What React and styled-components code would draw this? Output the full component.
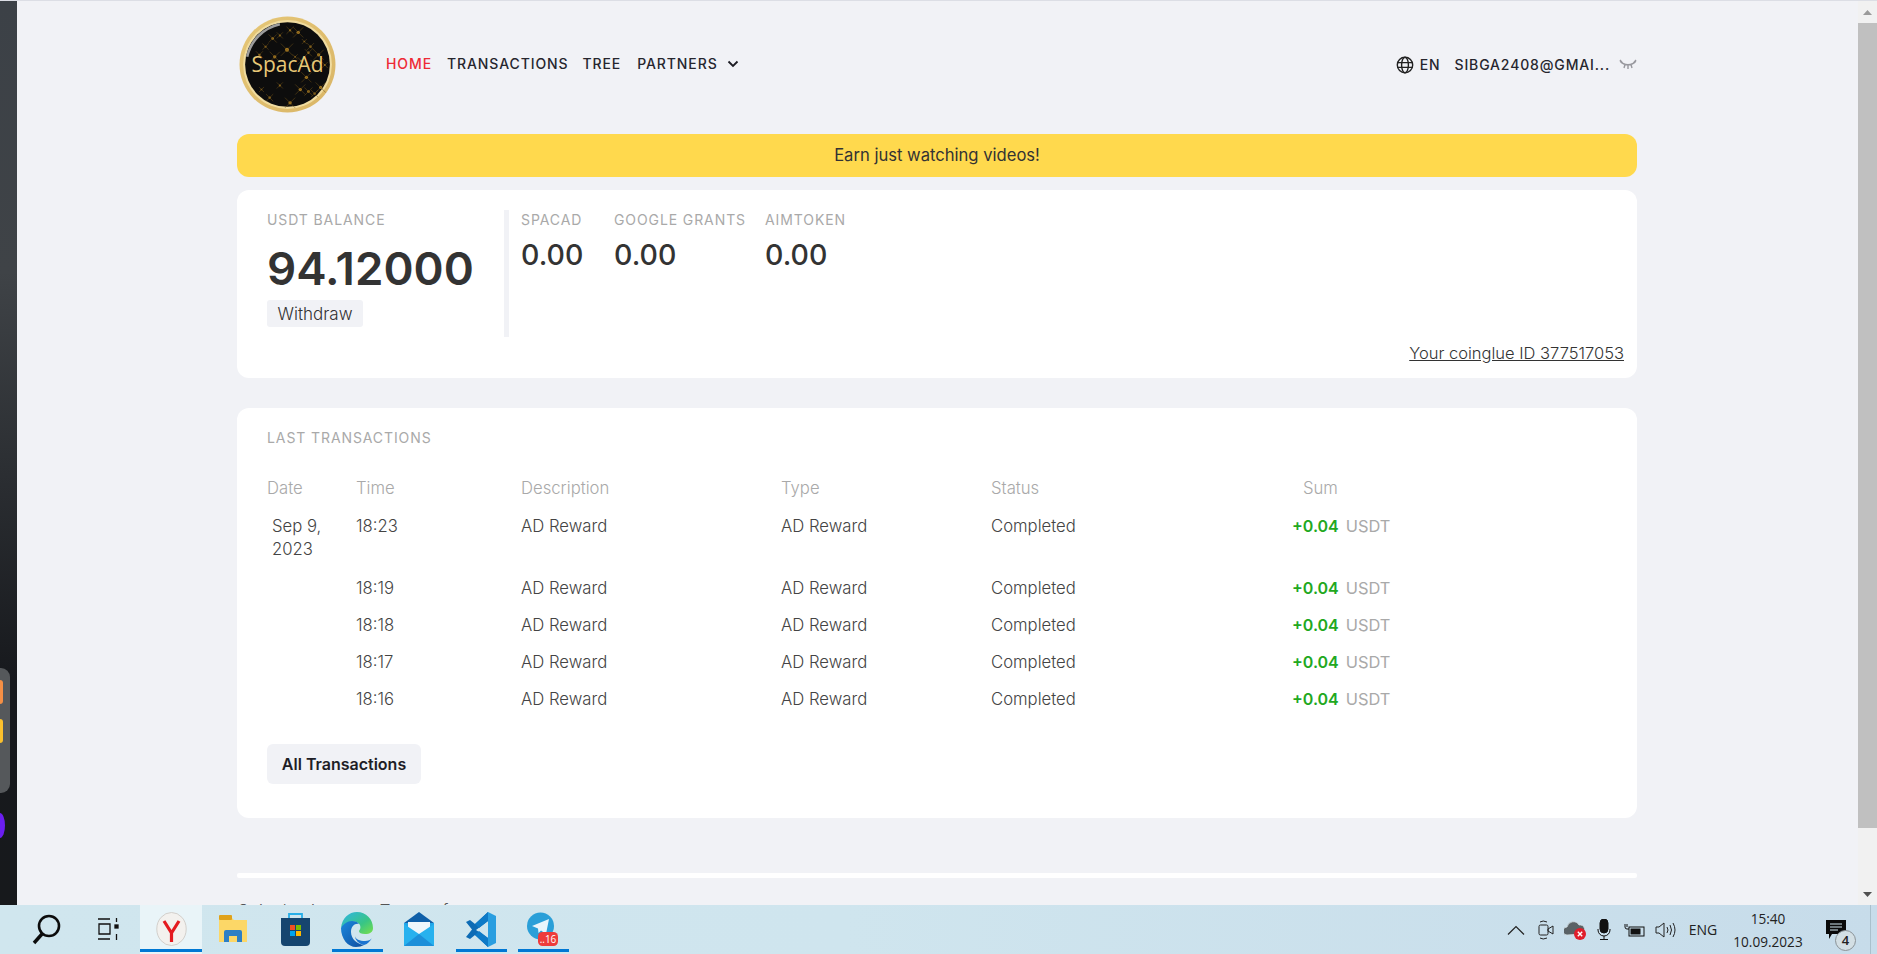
import React from "react";
import styled, { createGlobalStyle } from "styled-components";

const Global = createGlobalStyle`
  html, body { margin: 0; padding: 0; width: 1877px; height: 954px; overflow: hidden; background: #f1f2f6; }
  body { font-family: Inter, "Open Sans", sans-serif; color: #333; }
  * { box-sizing: border-box; }
`;

const Screen = styled.div`
  width: 1877px; height: 954px; display: flex; flex-direction: column; overflow: hidden;
`;
const Desk = styled.div`
  height: 905px; display: flex; border-top: 1px solid #dcdee5; background: #f1f2f6;
`;
const Strip = styled.div`
  width: 17px; flex: none; background: linear-gradient(180deg, #3c4147 0%, #3f4347 30%, #17191d 75%, #17191c 100%);
  display: flex; flex-direction: column; padding-top: 667px; gap: 20px;
`;
const Dock = styled.div`
  width: 10px; height: 125px; background: #55585b; border-radius: 0 9px 9px 0;
  display: flex; flex-direction: column; gap: 15px; padding-top: 12px;
`;
const DockTile = styled.div`
  width: 3px; height: 24px; border-radius: 0 5px 5px 0; background: ${p => p.$c};
`;
const DockDot = styled.div`
  width: 5px; height: 25px; border-radius: 0 5px 5px 0 / 0 12.5px 12.5px 0; background: #6b1ef0;
`;
const Main = styled.main`
  flex: 1; overflow: hidden; padding: 16px 0 0 220px;
`;
const Page = styled.div`
  width: 1400px;
`;
const Header = styled.header`
  height: 95px; display: flex; align-items: center; padding-left: 2px;
  & > svg:first-child { flex: none; }
`;
const Nav = styled.nav`
  display: flex; align-items: center; margin-left: 50px; padding-bottom: 2px;
`;
const NavLink = styled.a`
  font-size: 14px; font-weight: 500; letter-spacing: 0.9px; line-height: 20px;
  color: ${p => (p.$active ? "#ee2a35" : "#26262e")};
  margin-right: ${p => p.$gap}px; white-space: nowrap;
`;
const Right = styled.div`
  margin-left: auto; display: flex; align-items: center;
  & > svg:last-child { margin-left: 9px; }
`;
const RightText = styled.span`
  font-size: 14px; font-weight: 500; letter-spacing: 0.85px; color: #26262e; line-height: 20px; white-space: nowrap;
  margin-left: ${p => p.$ml}px;
`;
const Banner = styled.div`
  margin-top: 22px; height: 43px; border-radius: 12px; background: #ffd94d; padding-bottom: 2px;
  display: flex; align-items: center; justify-content: center;
  font-size: 16.6px; font-weight: 400; color: #333;
`;
const Card = styled.section`
  background: #fff; border-radius: 12px; margin-top: ${p => p.$mt}px; height: ${p => p.$h}px;
  padding: ${p => p.$pt}px 0 0 30px;
`;
const BalanceRow = styled.div`
  height: 127px; display: flex;
`;
const BalanceCol = styled.div`
  width: 237px; flex: none;
`;
const Label = styled.div`
  font-size: 14px; font-weight: 400; letter-spacing: 0.9px; line-height: 20px; color: #a9a9a9; white-space: nowrap;
`;
const BigValue = styled.div`
  font-size: 45.7px; font-weight: 600; line-height: 56px; margin-top: 11px; color: #333;
`;
const Withdraw = styled.button`
  display: block; border: 0; margin-top: 3px; width: 96px; height: 27px; border-radius: 3px; background: #f1f2f6;
  font: 300 17px Inter, sans-serif; color: #333; padding: 0;
`;
const Divider = styled.div`
  width: 5px; flex: none; background: #f1f2f6;
`;
const Token = styled.div`
  width: ${p => p.$w}px; flex: none; margin-left: ${p => p.$ml || 0}px;
`;
const TokenValue = styled.div`
  font-size: 28.5px; font-weight: 500; line-height: 34px; margin-top: 8px; color: #333;
`;
const LinkRow = styled.div`
  display: flex; justify-content: flex-end; padding-right: 13px; margin-top: 4px;
`;
const CoinLink = styled.a`
  font-size: 16.5px; font-weight: 300; line-height: 24px; color: #333; text-decoration: underline;
`;
const HeadRow = styled.div`
  display: grid; grid-template-columns: 89px 165px 260px 210px 301px 1fr;
  height: ${p => p.$h}px; font-size: 16.7px; font-weight: 300; line-height: 23px; color: #444;
`;
const TableHead = styled(HeadRow)`
  margin-top: 28px; margin-bottom: 7px; color: #a9a9a9; line-height: 24px; font-weight: 300;
`;
const Row = styled(HeadRow)`
  padding-top: 7.5px;
`;
const DateCell = styled.div`
  padding: 0 20px 0 5px;
`;
const SumHead = styled.div`
  padding-left: 11px;
`;
const Amount = styled.span`
  color: #22a81e; font-weight: 600; font-size: 16px;
`;
const Unit = styled.span`
  color: #a9a9a9; font-weight: 400; margin-left: 7px; font-size: 16.4px;
`;
const AllBtn = styled.button`
  display: block; margin-top: 26px; width: 154px; height: 40px; border: 0; border-radius: 6px;
  background: #f1f2f6; color: #1e1e26; font: 600 16px Inter, sans-serif; padding: 0 0 1px;
`;
const FooterLine = styled.div`
  margin-top: 55px; height: 5px; background: #fff; border-radius: 2px;
`;
const FooterLinks = styled.div`
  display: flex; margin-top: 23px; font-size: 16.7px; font-weight: 300; color: #555;
`;
const FooterLink = styled.a`
  margin-right: 55px;
`;
const Scrollbar = styled.div`
  width: 19px; flex: none; background: #f1f1f1; display: flex; flex-direction: column; align-items: center;
`;
const ScrollBtn = styled.div`
  height: 22px; width: 100%; display: flex; align-items: center; justify-content: center;
  margin-top: ${p => (p.$bottom ? "auto" : "0")};
`;
const Thumb = styled.div`
  width: 100%; height: 805px; background: #c0c0c0;
`;
const Taskbar = styled.footer`
  height: 49px; flex: none; background: linear-gradient(90deg, #d0e6ee 0%, #cfe5ee 45%, #c7dcea 100%);
  display: flex; align-items: stretch; padding-left: 16px;
`;
const Tile = styled.div`
  width: 62px; position: relative; display: flex; align-items: center; justify-content: center;
  padding-bottom: 1px;
  background: ${p => (p.$active ? "#e9f4f8" : "transparent")};
  &::after {
    content: ""; position: absolute; bottom: 2px; height: 3px; background: #0078d4;
    left: ${p => (p.$active ? 0 : 6)}px; right: ${p => (p.$active ? 0 : 5)}px;
    display: ${p => (p.$open ? "block" : "none")};
  }
`;
const Tray = styled.div`
  margin-left: auto; display: flex; align-items: center; padding-right: 6px; color: #111;
`;
const TrayIcon = styled.div`
  width: ${p => p.$w}px; display: flex; justify-content: center;
`;
const Lang = styled.div`
  font: 400 14px "Open Sans", sans-serif; width: 38px; margin-left: 4px; text-align: center; color: #222; white-space: nowrap;
`;
const Clock = styled.div`
  width: 76px; margin-left: 8px; text-align: center; font: 400 13.6px/23px "Open Sans", sans-serif; color: #222; white-space: nowrap;
`;
const Notify = styled.div`
  width: 65px; height: 100%; position: relative; display: flex; align-items: center; padding-left: 20px;
  border-right: 1px solid #a9c0cc;
`;
const Badge = styled.div`
  position: absolute; left: 29px; top: 25px; width: 21px; height: 21px; border-radius: 50%;
  border: 1.5px solid #8a9296; background: #d3dfe4; font: 600 13px/18px "Open Sans", sans-serif; text-align: center; color: #222;
`;

const stars = [
  [33,22,1.6],[40,19,1.2],[50,14,1.4],[58,16,2],[64,25,1],[70,30,1.4],[26,30,1.2],[20,38,1.4],[35,40,2],[47,33,2.4],[55,40,1],
  [61,44,1.4],[68,36,1.4],[78,38,2],[84,48,1.2],[73,46,1.2],[22,72,1],[30,80,1.4],[50,85,2],[60,72,2],[68,74,1.6],[74,76,1.4],[66,60,2],[80,70,2],[40,68,1.2]
];
const Logo = () => (
  <svg width="97" height="97" viewBox="0 0 95 95">
    <defs>
      <linearGradient id="ring" x1="0" y1="0" x2="1" y2="1">
        <stop offset="0" stopColor="#e6c777" /><stop offset="1" stopColor="#d9b566" />
      </linearGradient>
    </defs>
    <circle cx="47.5" cy="47.5" r="47" fill="url(#ring)" />
    <circle cx="47.5" cy="47.5" r="43.5" fill="#f0dca0" />
    <circle cx="47.5" cy="47.5" r="41.5" fill="#0d0d0d" />
    <path d="M8 40 A42 42 0 0 1 40 8" stroke="#9c9c9c" strokeWidth="2.5" fill="none" />
    {stars.map(([x, y, r], i) => (
      <g key={i} fill="#a97c22">
        <circle cx={x} cy={y} r={r * 0.8} />
        <path d={`M${x - r * 2.5} ${y - r * 2.5}L${x + r * 2.5} ${y + r * 2.5}M${x + r * 2.5} ${y - r * 2.5}L${x - r * 2.5} ${y + r * 2.5}`} stroke="#6e5218" strokeWidth=".5" />
      </g>
    ))}
    <text x="47.5" y="54.5" textAnchor="middle" fontFamily="Open Sans, sans-serif" fontSize="20.5" fontWeight="500" fill="#e8c877">SpacAd</text>
  </svg>
);
const Chevron = () => (
  <svg width="12" height="8" viewBox="0 0 12 8" fill="none" stroke="#1b1b22" strokeWidth="1.8"><path d="M1.5 1.5 6 6l4.5-4.5" /></svg>
);
const Globe = () => (
  <svg width="18" height="18" viewBox="0 0 18 18" fill="none" stroke="#222" strokeWidth="1.4">
    <circle cx="9" cy="9" r="7.7" /><ellipse cx="9" cy="9" rx="3.4" ry="7.7" /><path d="M1.3 6.6h15.4M1.3 11.4h15.4" />
  </svg>
);
const EyeClosed = () => (
  <svg width="18" height="12" viewBox="0 0 18 12" fill="none" stroke="#98989e" strokeWidth="1.4">
    <path d="M1 2c4 5 12 5 16 0M1 1l2.5 3M17 1l-2.5 3M6 5.5 5 9M12 5.5l1 3.5M9 6v4" />
  </svg>
);
const Search = () => (
  <svg width="30" height="32" viewBox="0 0 30 32" fill="none" stroke="#0c0c0c" strokeWidth="2.6">
    <circle cx="17" cy="13" r="10" /><path d="M10 21 2 30" strokeWidth="3.4" />
  </svg>
);
const TaskView = () => (
  <svg width="24" height="24" viewBox="0 0 24 24" fill="none" stroke="#111" strokeWidth="1.3">
    <path d="M1 2h12M1 22h12M2 7h11v10H2zM19.500 1v4M19.500 17v6" /><rect x="18" y="8" width="3" height="3" fill="#111" />
  </svg>
);
const Yandex = () => (
  <svg width="31" height="34" viewBox="0 0 31 34">
    <ellipse cx="15.500" cy="17" rx="14.700" ry="16.500" fill="#f3f1ee" stroke="#d2cfcb" />
    <path d="M8 9l7.500 12V30M23 9l-7.500 12" fill="none" stroke="#e41a1f" strokeWidth="3.200" />
  </svg>
);
const Explorer = () => (
  <svg width="28" height="28" viewBox="0 0 28 28">
    <path d="M0 2h12l3 3H28v22H0z" fill="#fcd767" /><rect y="0" width="13" height="5" rx="1" fill="#e0a21a" />
    <path d="M5 27V17q0-2 2-2h14q2 0 2 2v10h-5v-6h-8v6z" fill="#2d7fc5" />
  </svg>
);
const Store = () => (
  <svg width="29" height="34" viewBox="0 0 29 34">
    <path d="M8 7V2h13v5" fill="none" stroke="#28afe8" strokeWidth="1.800" />
    <path d="M0 6h29v24a4 4 0 0 1-4 4H4a4 4 0 0 1-4-4z" fill="#16456f" />
    <rect x="9" y="13" width="5" height="5" fill="#f25022" /><rect x="15" y="13" width="5" height="5" fill="#7fba00" />
    <rect x="9" y="19" width="5" height="5" fill="#00a4ef" /><rect x="15" y="19" width="5" height="5" fill="#ffb900" />
  </svg>
);
const Edge = () => (
  <svg width="32" height="35" viewBox="0 0 32 35">
    <defs>
      <linearGradient id="edgeA" x1="0" y1="0" x2="1" y2="1"><stop offset="0" stopColor="#2fb4e8" /><stop offset=".6" stopColor="#38c585" /><stop offset="1" stopColor="#79e04a" /></linearGradient>
      <linearGradient id="edgeB" x1="0" y1="0" x2="1" y2="1"><stop offset="0" stopColor="#1b87dd" /><stop offset="1" stopColor="#0f4fa0" /></linearGradient>
    </defs>
    <path d="M0 16C1 6 8 0 16 0c9 0 16 7 16 16 0 4-3 6-8 6-4 0-6-1-6-3 1-2 2-3 1-6-2-4-9-5-13-1-3 2-5 3-6 4z" fill="url(#edgeA)" />
    <path d="M0 16c1-2 5-7 11-7 3 0 6 1 7 3-4-1-8 2-8 8 0 7 6 12 13 13-2 1-5 2-8 2C7 35 0 27 0 16z" fill="url(#edgeB)" />
    <path d="M23 33c-5-1-9-5-9-9 0 3 5 5 10 5 3 0 6-1 7-3-2 3-4 6-8 7z" fill="#1a74d0" />
  </svg>
);
const Mail = () => (
  <svg width="30" height="34" viewBox="0 0 30 34">
    <path d="M15 0 30 11v5H0v-5z" fill="#0f5fa8" />
    <path d="M0 11h30v23H0z" fill="#22a5e8" />
    <path d="M4 10h22v7l-11 7-11-7z" fill="#eef6fb" />
    <path d="M0 12l15 10 15-10v22H0z" fill="#27b1ee" />
    <path d="M0 34 15 22l15 12z" fill="#1c8fd9" />
  </svg>
);
const VSCode = () => (
  <svg width="30" height="35" viewBox="0 0 30 35">
    <path d="M22 0 30 4v27l-8 4z" fill="#2a9ee0" />
    <path d="M22 0v9L10 18l12 8v9L9 23l-5 4-4-2 6-7.500L0 10l4-2 5 4z" fill="#0d6bb5" />
    <path d="M22 0 9 12l4 4 9-7zM22 35 9 23l4-4 9 7z" fill="#0e7ac7" />
  </svg>
);
const Telegram = () => (
  <svg width="32" height="34" viewBox="0 0 32 34">
    <circle cx="13.500" cy="14" r="13.500" fill="#2a9fd8" />
    <path d="M5 14 22 7l-3 15-5-3.500-2.500 2.500-.5-4.500z" fill="#e9f5fb" />
    <rect x="11" y="20" width="20" height="14" rx="4.500" fill="#ee3b3b" />
    <text x="21" y="31" textAnchor="middle" fontSize="10" fontFamily="Open Sans, sans-serif" fill="#fff">..16</text>
  </svg>
);
const TrayUp = () => (
  <svg width="18" height="10" viewBox="0 0 18 10" fill="none" stroke="#222" strokeWidth="1.200"><path d="M1 9.500 9 1.500l8 8" /></svg>
);
const Camera = () => (
  <svg width="16" height="20" viewBox="0 0 16 20" fill="none" stroke="#222" strokeWidth="1">
    <rect x="1" y="5" width="9" height="10" rx="1.500" /><path d="M10 9l5-3v8l-5-3zM2 2q3-2 7 0M2 18q3 2 7 0" />
  </svg>
);
const Cloud = () => (
  <svg width="22" height="20" viewBox="0 0 22 20">
    <path d="M3 15a4 4 0 0 1 0-8 6.500 6.500 0 0 1 12-2 4.500 4.500 0 0 1 2 9z" fill="#5a6266" stroke="#d2dde2" strokeWidth=".800" />
    <circle cx="16" cy="14" r="6" fill="#e01e2b" />
    <path d="M13.800 11.800l4.400 4.400M18.200 11.800l-4.400 4.400" stroke="#fff" strokeWidth="1.400" />
  </svg>
);
const Mic = () => (
  <svg width="14" height="21" viewBox="0 0 14 21" fill="none" stroke="#111" strokeWidth="1">
    <rect x="3" y="0" width="8" height="14" rx="4" fill="#111" /><path d="M1 10v1a6 6 0 0 0 12 0v-1M7 17v3M3 20.500h8" />
  </svg>
);
const Battery = () => (
  <svg width="21" height="14" viewBox="0 0 21 14" fill="none" stroke="#111" strokeWidth="1">
    <rect x="5" y="4" width="15" height="9" /><rect x="6.500" y="5.500" width="10" height="6" fill="#111" stroke="none" />
    <path d="M1 1v3q0 2 2 2h2M3 1v3" />
  </svg>
);
const Volume = () => (
  <svg width="21" height="16" viewBox="0 0 21 16" fill="none" stroke="#222" strokeWidth="1">
    <path d="M1 5h3l5-4v14l-5-4H1zM12 5q2 3 0 6M15 3q3 5 0 10M18 1q4 7 0 14" />
  </svg>
);
const Bubble = () => (
  <svg width="20" height="19" viewBox="0 0 20 19">
    <path d="M0 0h20v14H6l-3 5v-5H0z" fill="#0a0a0a" /><path d="M4 4h12M4 7h12M4 10h8" stroke="#cfe5ee" strokeWidth="1" />
  </svg>
);
const Arrow = ({ d, c }) => (
  <svg width="9" height="5" viewBox="0 0 9 5"><path d={d} fill={c} /></svg>
);

const rows = [
  { d: "Sep 9, 2023", t: "18:23", h: 62 },
  { t: "18:19", h: 37.3 },
  { t: "18:18", h: 37.3 },
  { t: "18:17", h: 37.3 },
  { t: "18:16", h: 37.3 },
];
const tiles = [
  { i: <Search /> }, { i: <TaskView /> }, { i: <Yandex />, active: true, open: true }, { i: <Explorer /> }, { i: <Store /> },
  { i: <Edge />, open: true }, { i: <Mail /> }, { i: <VSCode />, open: true }, { i: <Telegram />, open: true },
];

export default function App() {
  return (
    <Screen>
      <Global />
      <Desk>
        <Strip>
          <Dock><DockTile $c="#f58f45" /><DockTile $c="#fbc02d" /></Dock>
          <DockDot />
        </Strip>
        <Main>
          <Page>
            <Header>
              <Logo />
              <Nav>
                <NavLink $active $gap={15}>HOME</NavLink>
                <NavLink $gap={14}>TRANSACTIONS</NavLink>
                <NavLink $gap={16}>TREE</NavLink>
                <NavLink $gap={9}>PARTNERS</NavLink>
                <Chevron />
              </Nav>
              <Right>
                <Globe />
                <RightText $ml={6}>EN</RightText>
                <RightText $ml={14}>SIBGA2408@GMAI...</RightText>
                <EyeClosed />
              </Right>
            </Header>
            <Banner>Earn just watching videos!</Banner>
            <Card $mt={13} $h={188} $pt={20}>
              <BalanceRow>
                <BalanceCol>
                  <Label>USDT BALANCE</Label>
                  <BigValue>94.12000</BigValue>
                  <Withdraw>Withdraw</Withdraw>
                </BalanceCol>
                <Divider />
                <Token $w={93} $ml={12}><Label>SPACAD</Label><TokenValue>0.00</TokenValue></Token>
                <Token $w={151}><Label>GOOGLE GRANTS</Label><TokenValue>0.00</TokenValue></Token>
                <Token $w={100}><Label>AIMTOKEN</Label><TokenValue>0.00</TokenValue></Token>
              </BalanceRow>
              <LinkRow><CoinLink>Your coinglue ID 377517053</CoinLink></LinkRow>
            </Card>
            <Card $mt={30} $h={410} $pt={20}>
              <Label>LAST TRANSACTIONS</Label>
              <TableHead $h={24}>
                <div>Date</div><div>Time</div><div>Description</div><div>Type</div><div>Status</div><SumHead>Sum</SumHead>
              </TableHead>
              {rows.map(r => (
                <Row key={r.t} $h={r.h}>
                  <DateCell>{r.d}</DateCell>
                  <div>{r.t}</div>
                  <div>AD Reward</div>
                  <div>AD Reward</div>
                  <div>Completed</div>
                  <div><Amount>+0.04</Amount><Unit>USDT</Unit></div>
                </Row>
              ))}
              <AllBtn>All Transactions</AllBtn>
            </Card>
            <FooterLine />
            <FooterLinks>
              <FooterLink>Coinglue.io</FooterLink>
              <FooterLink>Terms of use</FooterLink>
            </FooterLinks>
          </Page>
        </Main>
        <Scrollbar>
          <ScrollBtn><Arrow d="M0 5 4.500 0 9 5z" c="#9a9a9a" /></ScrollBtn>
          <Thumb />
          <ScrollBtn $bottom><Arrow d="M0 0h9L4.500 5z" c="#505050" /></ScrollBtn>
        </Scrollbar>
      </Desk>
      <Taskbar>
        {tiles.map((t, i) => (
          <Tile key={i} $active={t.active} $open={t.open}>{t.i}</Tile>
        ))}
        <Tray>
          <TrayIcon $w={31}><TrayUp /></TrayIcon>
          <TrayIcon $w={29}><Camera /></TrayIcon>
          <TrayIcon $w={29}><Cloud /></TrayIcon>
          <TrayIcon $w={30}><Mic /></TrayIcon>
          <TrayIcon $w={31}><Battery /></TrayIcon>
          <TrayIcon $w={30}><Volume /></TrayIcon>
          <Lang>ENG</Lang>
          <Clock>15:40<br />10.09.2023</Clock>
          <Notify><Bubble /><Badge>4</Badge></Notify>
        </Tray>
      </Taskbar>
    </Screen>
  );
}
